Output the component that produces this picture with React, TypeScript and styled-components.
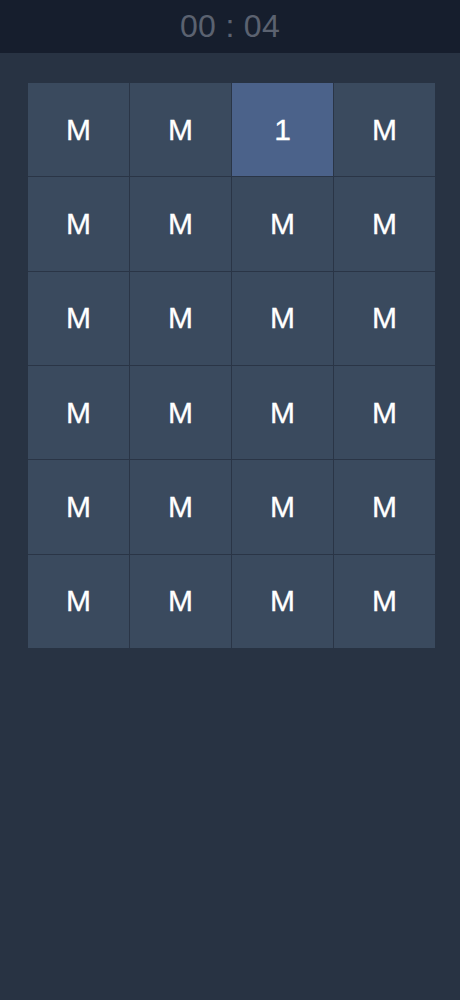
import React from "react";
import styled, { createGlobalStyle } from "styled-components";

const Global = createGlobalStyle`
  html, body { margin: 0; padding: 0; background: #283343; }
  body { font-family: "Liberation Sans", Arial, sans-serif; }
`;

const Page = styled.div`
  min-height: 1000px;
  background: #283343;
  display: flex;
  flex-direction: column;
`;

const Header = styled.header`
  height: 53px;
  background: #161e2d;
  display: flex;
  align-items: center;
  justify-content: center;
`;

const Timer = styled.div`
  color: #5b6270;
  font-size: 32px;
  letter-spacing: 0.3px;
  font-family: "Liberation Sans", Arial, sans-serif;
`;

const Board = styled.div`
  margin: 30px 0 0 28px;
  width: 407px;
  height: 565px;
  display: grid;
  grid-template-columns: repeat(4, 1fr);
  grid-template-rows: repeat(6, 1fr);
  gap: 1px;
  background: #2a3546;
`;

const Cell = styled.div<{ $open?: boolean }>`
  background: ${(p) => (p.$open ? "#4b628a" : "#3a4a5e")};
  color: #ffffff;
  font-size: 30px;
  -webkit-text-stroke: 0.3px #ffffff;
  display: flex;
  align-items: center;
  justify-content: center;
  user-select: none;
`;

export default function App() {
  const cells = Array.from({ length: 24 }, (_, i) => i);
  return (
    <>
      <Global />
      <Page>
        <Header>
          <Timer>00 : 04</Timer>
        </Header>
        <Board>
          {cells.map((i) => (
            <Cell key={i} $open={i === 2}>
              {i === 2 ? "1" : "M"}
            </Cell>
          ))}
        </Board>
      </Page>
    </>
  );
}
